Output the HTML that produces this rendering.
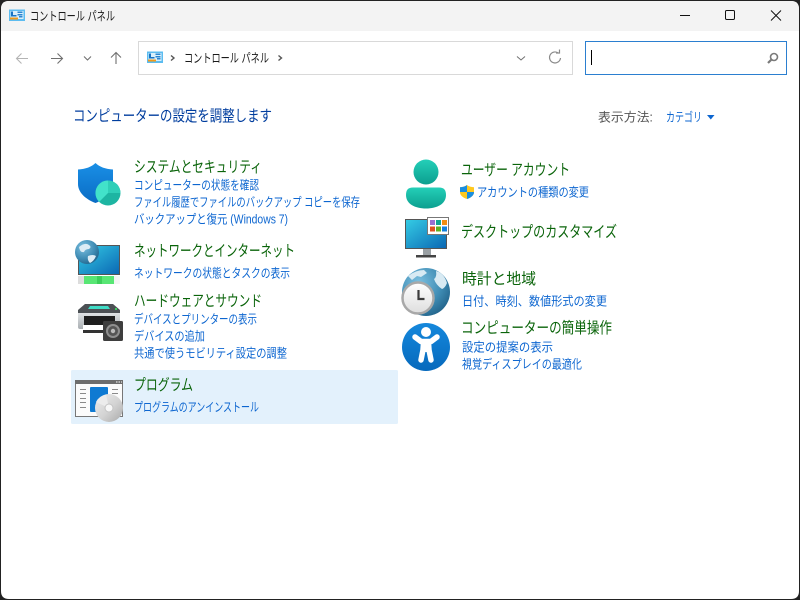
<!DOCTYPE html>
<html lang="ja"><head><meta charset="utf-8"><title>コントロール パネル</title>
<style>
html,body{margin:0;padding:0;width:800px;height:600px;overflow:hidden;background:#fff}
svg{display:block;position:absolute;left:0;top:0}
text{font-family:"Liberation Sans","Noto Sans CJK JP",sans-serif;white-space:pre}
.t{font-size:15.5px;fill:#0a640a}
.l{font-size:12.5px;fill:#0d66d0}
.b{font-size:12.5px;fill:#1a1a1a}
</style></head><body>
<svg width="800" height="600" viewBox="0 0 800 600" xmlns="http://www.w3.org/2000/svg">
<defs>
<linearGradient id="sh" x1="0" y1="0" x2="0" y2="1"><stop offset="0" stop-color="#1a8fe6"/><stop offset="1" stop-color="#0a6cc4"/></linearGradient>
<linearGradient id="te" x1="0" y1="0" x2="0" y2="1"><stop offset="0" stop-color="#24cfb8"/><stop offset="1" stop-color="#0b9f8f"/></linearGradient>
<linearGradient id="mon" x1="0" y1="0" x2="1" y2="1"><stop offset="0" stop-color="#34cbe4"/><stop offset="1" stop-color="#0b68b4"/></linearGradient>
<linearGradient id="gr" x1="0" y1="0" x2="1" y2="0"><stop offset="0" stop-color="#dcdcdc"/><stop offset="1" stop-color="#f6f6f6"/></linearGradient>
<linearGradient id="pr" x1="0" y1="0" x2="0" y2="1"><stop offset="0" stop-color="#dfe2e4"/><stop offset="1" stop-color="#a9aeb2"/></linearGradient>
<radialGradient id="gl" cx=".35" cy=".3" r=".8"><stop offset="0" stop-color="#7cc0e0"/><stop offset=".6" stop-color="#3f8cb4"/><stop offset="1" stop-color="#1f5f86"/></radialGradient>
<linearGradient id="cd" x1="0" y1="0" x2="1" y2="1"><stop offset="0" stop-color="#eeeeee"/><stop offset=".55" stop-color="#d2d2d2"/><stop offset="1" stop-color="#a9a9a9"/></linearGradient>
<linearGradient id="cl" x1="0" y1="0" x2="0" y2="1"><stop offset="0" stop-color="#fff"/><stop offset="1" stop-color="#dedede"/></linearGradient>
<linearGradient id="ac" x1="0" y1="0" x2="0" y2="1"><stop offset="0" stop-color="#1588dc"/><stop offset="1" stop-color="#0669bc"/></linearGradient>
</defs>

<!-- window frame -->
<rect width="800" height="600" fill="#222"/>
<path d="M9 1H791Q799 1 799 9V591Q799 599 791 599H9Q1 599 1 591V9Q1 1 9 1Z" fill="#fff"/>
<path d="M9 1H791Q799 1 799 9V31H1V9Q1 1 9 1Z" fill="#f3f3f3"/>

<!-- title bar icon -->
<g id="cpi">
<rect x="9" y="9.5" width="16" height="11.5" fill="#5cbcf0"/>
<rect x="10.5" y="11" width="13" height="8" fill="#d8effb"/>
<path d="M11 11.500h2v3.500h3.500v1.500H11z" fill="#1874c4"/>
<path d="M17.500 11.500h5v1.500h-5zM17.500 14h5v1.500h-5zM19 16h3.500v1.500H19z" fill="#2b86d0"/>
<rect x="10" y="17.500" width="8" height="2" fill="#f09a18"/>
</g>
<text class="b" x="30" y="20.500" textLength="85" lengthAdjust="spacingAndGlyphs">コントロール パネル</text>

<!-- window buttons -->
<path d="M680 15.500h10" stroke="#111" stroke-width="1" fill="none"/>
<rect x="725.500" y="10.500" width="9" height="9" rx="1.200" fill="none" stroke="#111" stroke-width="1"/>
<path d="M771 10.500l10 10M781 10.500l-10 10" stroke="#111" stroke-width="1" fill="none"/>

<!-- nav -->
<g fill="none" stroke-width="1.100">
<path d="M28 58.500H16.500M21.500 53.500l-5 5 5 5" stroke="#b4b4b4"/>
<path d="M51 58.500H62.500M57.500 53.500l5 5-5 5" stroke="#707070"/>
<path d="M84 56.500l3.500 3.500 3.500-3.500" stroke="#707070"/>
<path d="M116 64V52.500M111 57.500l5-5 5 5" stroke="#707070"/>
</g>

<!-- address bar -->
<rect x="138.500" y="41.500" width="434" height="33" fill="#fff" stroke="#d9d9d9"/>
<use href="#cpi" x="138" y="42"/>
<path d="M171 55.500l3 2.500-3 2.500" fill="none" stroke="#555" stroke-width="1.400"/>
<text class="b" x="184" y="62.500" textLength="85" lengthAdjust="spacingAndGlyphs">コントロール パネル</text>
<path d="M278.500 55.500l3 2.500-3 2.500" fill="none" stroke="#555" stroke-width="1.400"/>
<path d="M517 56.500l4 3.500 4-3.500" fill="none" stroke="#707070"/>
<path d="M558.500 53.200A5.500 5.500 0 1 0 560.500 58M556 53h3.500v-3.500" fill="none" stroke="#8a8a8a" stroke-width="1.200"/>

<!-- search box -->
<rect x="585.500" y="41.500" width="201" height="33" fill="#fff" stroke="#2b7fd0"/>
<rect x="591" y="50" width="1" height="15" fill="#000"/>
<circle cx="774" cy="57" r="3.500" fill="none" stroke="#7a7a7a" stroke-width="1.600"/>
<path d="M771.500 59.500l-3.500 3.500" stroke="#7a7a7a" stroke-width="2.200" fill="none"/>

<!-- heading -->
<text x="73" y="121" textLength="199" lengthAdjust="spacingAndGlyphs" style="font-size:15.500px;fill:#003d9e">コンピューターの設定を調整します</text>
<text x="598" y="121.500" textLength="55" lengthAdjust="spacingAndGlyphs" style="font-size:12.500px;fill:#555">表示方法:</text>
<text class="l" x="666" y="121.500" textLength="36" lengthAdjust="spacingAndGlyphs">カテゴリ</text>
<path d="M707 115h7.500l-3.700 4.500z" fill="#0d66d0"/>

<!-- highlight -->
<rect x="71" y="370" width="327" height="54" rx="1.500" fill="#e3f1fc"/>

<!-- shield -->
<path d="M95.500 163c4 4 10 6 17.500 6.500V184c0 8-7 15-17.500 19C85 199 78 192 78 184V169.500c7.500-.5 13.500-2.500 17.500-6.500z" fill="url(#sh)"/>
<circle cx="108" cy="193" r="12.500" fill="#1db5a2"/>
<path d="M108 193V180.500A12.500 12.500 0 0 0 99.200 201.900z" fill="#42e2ca"/>
<path d="M108 193V180.500A12.500 12.500 0 0 1 120.500 193z" fill="#2fcfb8"/>

<!-- network -->
<rect x="78" y="245" width="42" height="30" fill="#555"/>
<rect x="79" y="246" width="40" height="28" fill="url(#mon)"/>
<rect x="78" y="276" width="42" height="8" fill="url(#gr)"/>
<rect x="84" y="276" width="30" height="8" fill="#58e674"/>
<rect x="97" y="276" width="5" height="8" fill="#3ccf5a"/>
<circle cx="87" cy="252" r="12" fill="url(#gl)"/>
<path d="M79 247q6-5 10-2 3 2 0 4-4 0-5 3-4 1-5-5zM88 256q5-2 8 0-2 5-6 7-3-3-2-7z" fill="#dcecf5"/>

<!-- printer -->
<path d="M78 313h42v14q0 2-2 2H80q-2 0-2-2z" fill="url(#pr)"/>
<path d="M85 304h28l7 6v3H78v-3z" fill="#4c5054"/>
<path d="M90 306h18l2 3H88z" fill="#3fdcc6"/>
<rect x="84" y="316" width="31" height="9" fill="#1e1e1e"/>
<path d="M83 325h24v5H83z" fill="#fff"/>
<rect x="83" y="330" width="21" height="3" fill="#333"/>
<rect x="115" y="308" width="2" height="2" fill="#3fd060"/>
<rect x="103" y="321" width="20" height="20" rx="1.500" fill="#3e3e3e"/>
<circle cx="113" cy="331" r="7" fill="#8f8f8f"/>
<circle cx="113" cy="331" r="5" fill="#555"/>
<circle cx="113" cy="331" r="2.200" fill="#bbb"/>

<!-- programs -->
<rect x="75.500" y="380.500" width="47" height="36" fill="#fbfbfb" stroke="#777"/>
<rect x="75" y="380" width="48" height="4" fill="#6d6d6d"/>
<path d="M116 382h1.500M118.500 382h1.500M121 382h1" stroke="#fff"/>
<path d="M80 389.500h6M80 393.500h6M80 398.500h6M80 402.500h6M80 407.500h6M112 389.500h6M112 393.500h6" stroke="#8a8a8a"/>
<rect x="90" y="387" width="18" height="25" rx="1" fill="#0f7ad2"/>
<circle cx="109" cy="408" r="14" fill="url(#cd)"/>
<path d="M109 408L96 402Q99 396 106 394.500z" fill="#ececec"/>
<circle cx="109" cy="408" r="4" fill="#f7f7f7" stroke="#c4c4c4"/>

<!-- user -->
<circle cx="426" cy="172" r="12.500" fill="url(#te)"/>
<path d="M406 195c0-5 2-7.500 7-7.500h26c5 0 7 2.500 7 7.500 0 9-9 13.500-20 13.500s-20-4.500-20-13.500z" fill="url(#te)"/>

<!-- desktop -->
<rect x="405" y="219" width="42" height="30" fill="#555"/>
<rect x="406" y="220" width="40" height="28" fill="url(#mon)"/>
<rect x="423" y="249" width="8" height="6" fill="#9aa0a4"/>
<rect x="416" y="255" width="20" height="2.500" fill="#444"/>
<rect x="427.500" y="217.500" width="21" height="17" fill="#fff" stroke="#777"/>
<rect x="430" y="220" width="5" height="5" fill="#9a6fd0"/><rect x="436" y="220" width="5" height="5" fill="#12a594"/><rect x="442" y="220" width="5" height="5" fill="#f08c10"/>
<rect x="430" y="226.500" width="5" height="5" fill="#e0501e"/><rect x="436" y="226.500" width="5" height="5" fill="#62b01e"/><rect x="442" y="226.500" width="5" height="5" fill="#1080dc"/>

<!-- clock -->
<circle cx="426" cy="292" r="24" fill="url(#gl)"/>
<path d="M408 276q8-6 16-6l3 3-6 4-4-1-5 4zM436 271q8 2 11 12-2 5-5 6-6-4-8-10 3-2 2-8z" fill="#d8eaf3"/>
<circle cx="418" cy="298" r="15.500" fill="url(#cl)" stroke="#a8a8a8" stroke-width="2.500"/>
<path d="M418.500 290v9h6" fill="none" stroke="#3c3c3c" stroke-width="2.200"/>

<!-- accessibility -->
<circle cx="426" cy="347" r="24" fill="url(#ac)"/>
<circle cx="426" cy="332" r="5" fill="#fff"/>
<path d="M415 337l6 4.500h10l6-4.500" fill="none" stroke="#fff" stroke-width="5.500" stroke-linecap="round" stroke-linejoin="round"/>
<path d="M423.500 343l-.5 7-2 10M428.500 343l.5 7 2 10" fill="none" stroke="#fff" stroke-width="5.500" stroke-linecap="round" stroke-linejoin="round"/>
<rect x="421" y="340" width="10" height="12" fill="#fff"/>

<!-- small uac shield -->
<path d="M467 185c2 1.500 4 2 7 2.200v5c0 3-3 5.500-7 6.800-4-1.300-7-3.800-7-6.800v-5c3-.2 5-.7 7-2.200z" fill="#ffc91f"/>
<path d="M467 185c-2 1.500-4 2-7 2.200v4.800h7z" fill="#1a8ee0"/>
<path d="M467 192h7v.2c0 3-3 5.500-7 6.800z" fill="#1a8ee0"/>

<!-- left column text -->
<text class="t" x="134" y="172" textLength="128" lengthAdjust="spacingAndGlyphs">システムとセキュリティ</text>
<text class="l" x="134" y="189.500" textLength="125" lengthAdjust="spacingAndGlyphs">コンピューターの状態を確認</text>
<text class="l" x="134" y="206.500" textLength="226" lengthAdjust="spacingAndGlyphs">ファイル履歴でファイルのバックアップ コピーを保存</text>
<text class="l" x="134" y="223.500" textLength="154" lengthAdjust="spacingAndGlyphs">バックアップと復元 (Windows 7)</text>
<text class="t" x="134" y="256" textLength="161" lengthAdjust="spacingAndGlyphs">ネットワークとインターネット</text>
<text class="l" x="134" y="277.500" textLength="156" lengthAdjust="spacingAndGlyphs">ネットワークの状態とタスクの表示</text>
<text class="t" x="134" y="306" textLength="128" lengthAdjust="spacingAndGlyphs">ハードウェアとサウンド</text>
<text class="l" x="134" y="323.500" textLength="123" lengthAdjust="spacingAndGlyphs">デバイスとプリンターの表示</text>
<text class="l" x="134" y="340.500" textLength="71" lengthAdjust="spacingAndGlyphs">デバイスの追加</text>
<text class="l" x="134" y="357.500" textLength="153" lengthAdjust="spacingAndGlyphs">共通で使うモビリティ設定の調整</text>
<text class="t" x="134" y="390" textLength="59" lengthAdjust="spacingAndGlyphs">プログラム</text>
<text class="l" x="134" y="411.500" textLength="125" lengthAdjust="spacingAndGlyphs">プログラムのアンインストール</text>

<!-- right column text -->
<text class="t" x="461" y="175" textLength="109" lengthAdjust="spacingAndGlyphs">ユーザー アカウント</text>
<text class="l" x="477" y="196.500" textLength="112" lengthAdjust="spacingAndGlyphs">アカウントの種類の変更</text>
<text class="t" x="461" y="237" textLength="156" lengthAdjust="spacingAndGlyphs">デスクトップのカスタマイズ</text>
<text class="t" x="462" y="284" textLength="74" lengthAdjust="spacingAndGlyphs">時計と地域</text>
<text class="l" x="462" y="305.500" textLength="145" lengthAdjust="spacingAndGlyphs">日付、時刻、数値形式の変更</text>
<text class="t" x="461" y="333" textLength="151" lengthAdjust="spacingAndGlyphs">コンピューターの簡単操作</text>
<text class="l" x="462" y="351.500" textLength="91" lengthAdjust="spacingAndGlyphs">設定の提案の表示</text>
<text class="l" x="462" y="368.500" textLength="120" lengthAdjust="spacingAndGlyphs">視覚ディスプレイの最適化</text>
</svg>
</body></html>
